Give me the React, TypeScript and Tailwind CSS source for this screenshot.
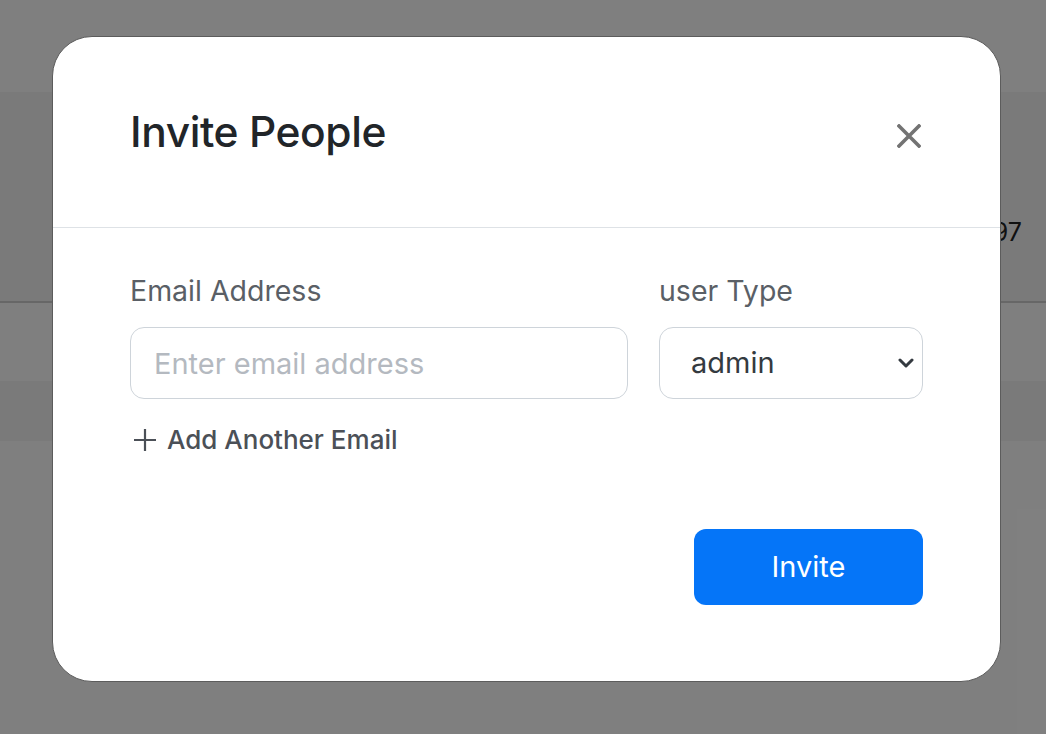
import { useState } from "react";

function CloseIcon() {
  return (
    <svg width="24" height="24" viewBox="0 0 24 24" fill="none" aria-hidden="true">
      <path d="M2 2L22 22M22 2L2 22" stroke="#737373" strokeWidth="3.6" strokeLinecap="square" />
    </svg>
  );
}

function PlusIcon() {
  return (
    <svg width="26" height="26" viewBox="0 0 26 26" fill="none" aria-hidden="true">
      <path d="M13 2V24M2 13H24" stroke="#4b5057" strokeWidth="2.2" />
    </svg>
  );
}

function ChevronDown() {
  return (
    <svg width="16" height="12" viewBox="0 0 16 12" fill="none" aria-hidden="true">
      <path d="M2 3L8 9L14 3" stroke="#343a40" strokeWidth="3" strokeLinecap="round" strokeLinejoin="round" />
    </svg>
  );
}

export default function App() {
  const [email, setEmail] = useState("");

  return (
    <div className="relative h-[734px] w-[1046px] overflow-hidden bg-white font-['Inter',sans-serif]">
      {/* page behind the dialog */}
      <div className="flex flex-col">
        <div className="h-[92px] bg-white" />
        <div className="flex h-[211px] items-start justify-end border-b-2 border-[#cfcfcf] bg-[#f4f4f4] pr-[24px] pt-[128px]">
          <span className="text-[25px] leading-none text-[#222]">1097</span>
        </div>
        <div className="h-[78px] bg-white" />
        <div className="h-[60px] bg-[#f5f5f5]" />
      </div>

      <div className="absolute inset-0 bg-black/50">
        <div className="ml-[52px] mt-[36px] w-[949px] overflow-hidden rounded-[40px] border border-[#5c5c5c] bg-white">
          <div className="flex h-[191px] items-center justify-between border-b border-[#dee2e6] pl-[77px] pr-[75px]">
            <h2 className="text-[42.5px] font-medium tracking-[-0.01em] text-[#212529]">Invite People</h2>
            <button type="button" className="mt-[8px] grid h-8 w-8 place-items-center">
              <CloseIcon />
            </button>
          </div>

          <div className="px-[77px] pb-[76px] pt-[43px]">
            <div className="grid grid-cols-[498px_1fr] gap-x-[31px]">
              <div className="flex flex-col">
                <label className="text-[28.5px] leading-[40px] text-[#5a5f66]">Email Address</label>
                <input
                  value={email}
                  onChange={(e) => setEmail(e.target.value)}
                  placeholder="Enter email address"
                  className="mt-[16px] h-[72px] rounded-[14px] border-[1.5px] border-[#ced4da] px-[23px] text-[29px] text-[#343a40] outline-none placeholder:text-[#b4b9c0]"
                />
              </div>
              <div className="flex flex-col">
                <label className="text-[28.5px] leading-[40px] text-[#5a5f66]">user Type</label>
                <div className="mt-[16px] flex h-[72px] items-center justify-between rounded-[14px] border-[1.5px] border-[#ced4da] pl-[31px] pr-[8px]">
                  <span className="text-[29px] text-[#343a40]">admin</span>
                  <ChevronDown />
                </div>
              </div>
            </div>

            <button type="button" className="mt-[21px] flex items-center gap-[9px] pl-[2px] text-[#4b5057]">
              <PlusIcon />
              <span className="text-[26px] font-medium">Add Another Email</span>
            </button>

            <div className="mt-[70px] flex justify-end">
              <button
                type="button"
                className="h-[76px] w-[229px] rounded-[12px] bg-[#0575f8] text-[29px] text-white"
              >
                Invite
              </button>
            </div>
          </div>
        </div>
      </div>
    </div>
  );
}
